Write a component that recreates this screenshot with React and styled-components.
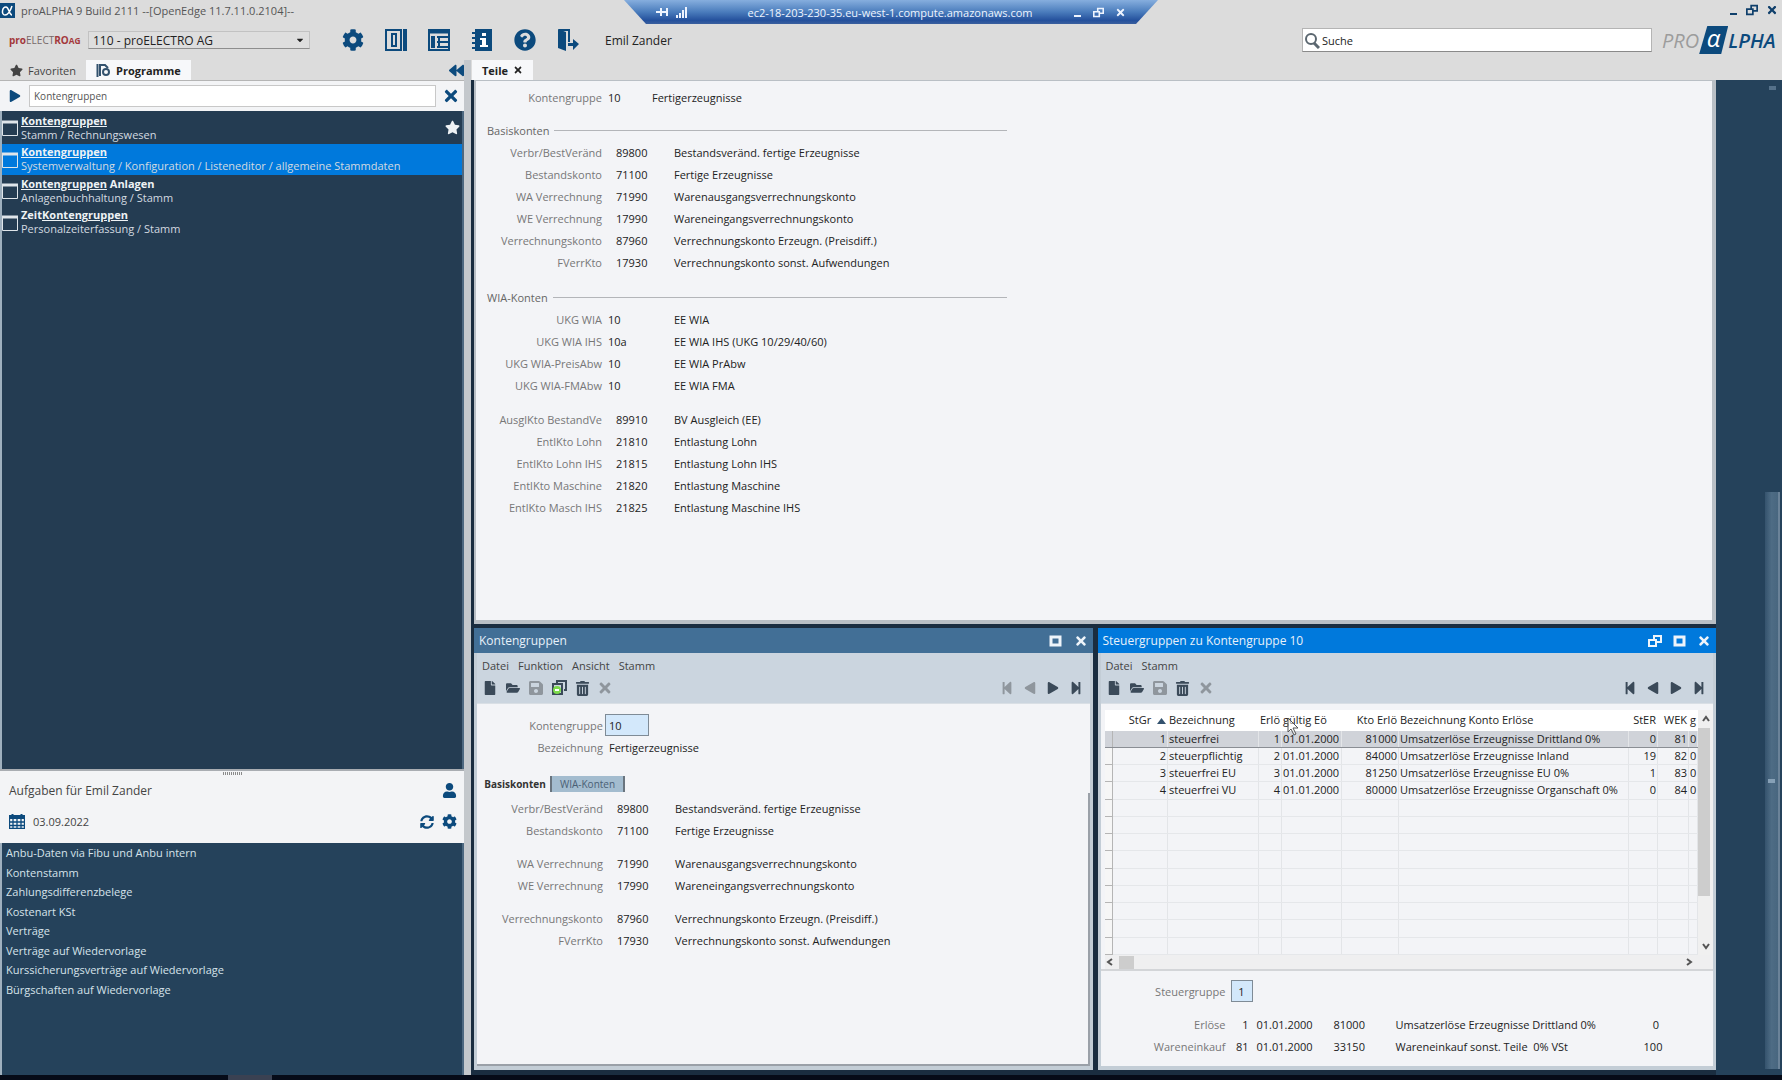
import React, { Component } from "react";
import styled, { createGlobalStyle } from "styled-components";
import {
  FaBackward,
  FaCaretDown,
  FaCog,
  FaFile,
  FaFolderOpen,
  FaPlay,
  FaQuestionCircle,
  FaSave,
  FaStar,
  FaStepBackward,
  FaStepForward,
  FaSyncAlt,
  FaTimes,
  FaTrashAlt,
  FaUser
} from "react-icons/fa";

const GlobalStyle = createGlobalStyle`
  * {
    box-sizing: border-box;
  }
  body {
    margin: 0;
    font-family: "Open Sans", "Noto Sans", sans-serif;
    font-size: 11px;
    color: #222;
    background: #060b18;
  }
  button, input, select {
    font: inherit;
    color: inherit;
  }
  button {
    display: inline-flex;
    align-items: center;
    justify-content: center;
    border: 0;
    padding: 0;
    background: none;
    cursor: pointer;
  }
  ul {
    list-style: none;
    margin: 0;
    padding: 0;
  }
  a {
    color: inherit;
    text-decoration: none;
  }
`;

/* ---------- frame ---------- */

const Page = styled.div`
  display: flex;
  flex-direction: column;
  min-height: 100vh;
  background: #dcdcdc;
`;
const TitleBar = styled.div`
  display: flex;
  align-items: center;
  gap: 6px;
  height: 20px;
  padding-right: 4px;
  color: #555;
`;
const TitleText = styled.div`
  flex: 1;
`;
const RemoteBar = styled.div`
  position: absolute;
  top: 0;
  left: 50%;
  width: 534px;
  height: 24px;
  margin-left: -267px;
  padding: 0 32px;
  display: flex;
  align-items: center;
  gap: 8px;
  color: #eef4ff;
  background: linear-gradient(#86aede, #4a7cbc 50%, #24509c 85%, #3a5f9e);
  clip-path: polygon(0 0, 100% 0, 512px 100%, 22px 100%);
`;
const RemoteHost = styled.span`
  flex: 1;
  padding-left: 20px;
  text-align: center;
`;
const WindowButtons = styled.div`
  display: flex;
  align-items: center;
  gap: ${props => props.gap || 8}px;
  color: ${props => props.color || "#0f3f6b"};
`;
const Toolbar = styled.div`
  display: flex;
  align-items: center;
  height: 40px;
  padding: 0 4px 0 9px;
`;
const CompanyLogo = styled.div`
  width: 79px;
  font-size: 10px;
  font-weight: bold;
  color: #a3383b;
  span {
    color: #77696a;
    font-weight: normal;
  }
`;
const SelectBox = styled.label`
  position: relative;
  width: 222px;
  svg {
    position: absolute;
    right: 5px;
    top: 4px;
    pointer-events: none;
  }
  select {
    appearance: none;
    width: 100%;
    height: 18px;
    padding: 0 4px;
    border: 1px solid #c2c2c2;
    border-bottom-color: #8e8e8e;
    border-radius: 0;
    background: #dedede;
    font-size: 12px;
  }
`;
const ToolIcons = styled.div`
  display: flex;
  gap: 19px;
  margin: 0 25px 0 31px;
  color: #0c4a7d;
  button {
    width: 24px;
    height: 24px;
  }
`;
const UserName = styled.div`
  flex: 1;
  font-size: 12px;
`;
const SearchBox = styled.label`
  display: flex;
  align-items: center;
  gap: 2px;
  width: 350px;
  height: 24px;
  margin-right: 10px;
  padding-left: 2px;
  border: 1px solid #b4b4b4;
  border-bottom-color: #8a8a8a;
  background: white;
  input {
    flex: 1;
    min-width: 0;
    border: 0;
    padding: 0;
    outline: 0;
  }
  input::placeholder {
    color: #222;
    opacity: 1;
  }
`;
const Brand = styled.div`
  display: flex;
  align-items: center;
  width: 116px;
  font-size: 20px;
  font-style: italic;
  color: #9c9c9c;
`;
const BrandAlpha = styled.span`
  width: 29px;
  height: 28px;
  line-height: 24px;
  text-align: center;
  font-size: 24px;
  color: white;
  background: #0c4a7d;
  clip-path: polygon(28% 0, 100% 0, 76% 100%, 0 100%);
`;
const BrandEnd = styled.span`
  color: #0c4a7d;
  font-weight: 600;
`;
const Workspace = styled.div`
  flex: 1;
  display: grid;
  grid-template-columns: 464px minmax(0, 1fr) 66px;
`;
const TabRow = styled.div`
  display: flex;
  height: 20px;
  padding-left: ${props => props.indent || 0}px;
`;
const Tab = styled.button`
  gap: 5px;
  padding: 0 10px;
  color: ${props => (props.active ? "#222" : "#444")};
  font-weight: ${props => (props.active ? "bold" : "normal")};
  background: ${props => (props.active ? "#f7f8fa" : "none")};
`;
const CollapseButton = styled.button`
  margin-left: auto;
  color: #0c4a7d;
`;
const Footer = styled.div`
  height: 5px;
  padding-left: 228px;
  background: #060b18;
  div {
    width: 44px;
    height: 5px;
    background: #3a4152;
  }
`;

/* ---------- sidebar ---------- */

const Sidebar = styled.div`
  display: flex;
  flex-direction: column;
`;
const ProgramSearch = styled.div`
  display: flex;
  align-items: center;
  height: 31px;
  padding: 0 4px 0 9px;
  background: #f3f4f6;
  border-top: 1px solid #b5b5b5;
  color: #0c4a7d;
  input {
    flex: 1;
    height: 22px;
    margin: 0 6px 0 8px;
    padding: 0 4px;
    border: 1px solid #c8c8c8;
    outline: 0;
    background: white;
    color: #555;
    font-size: 10px;
  }
`;
const DarkList = styled.div`
  flex: ${props => props.grow};
  border-left: 2px solid #9fb0be;
  border-right: 2px solid #4d6880;
  background: ${props => props.bg};
`;
const ProgramList = styled.ul`
  display: grid;
  grid-auto-rows: 1fr;
  height: 126px;
  margin-top: 1px;
`;
const Program = styled.li`
  display: flex;
  align-items: center;
  padding-right: 2px;
  line-height: 14px;
  color: #d3dae0;
  background: ${props => (props.selected ? "#0079dc" : "none")};
  a {
    flex: 1;
    padding-left: 3px;
  }
  strong {
    display: block;
    color: #eef2f5;
  }
`;
const TaskHeader = styled.div`
  height: 74px;
  padding: 1px 7px 0 9px;
  border-top: 2px solid #a9adb2;
  background: #f3f4f6;
`;
const Grip = styled.div`
  width: 20px;
  height: 3px;
  margin: 0 auto;
  background: repeating-linear-gradient(90deg, #8a8a8a 0 1px, #f3f4f6 1px 2px);
`;
const TaskRow = styled.div`
  display: flex;
  align-items: center;
  gap: 8px;
  height: 31px;
  font-size: ${props => props.size || 11}px;
  color: #444;
  svg {
    color: #0c4a7d;
  }
  span {
    flex: 1;
  }
`;
const TaskList = styled.ul`
  display: grid;
  grid-auto-rows: 1fr;
  height: 156px;
  padding-left: 4px;
  color: #d6e2ea;
  li {
    display: flex;
    align-items: center;
  }
`;

/* ---------- main area ---------- */

const Main = styled.div`
  display: flex;
  flex-direction: column;
  border-left: 7px solid #c4c8cc;
`;
const Desk = styled.div`
  flex: 1;
  display: flex;
  flex-direction: column;
  gap: 4px;
  padding: 0 0 5px 3px;
  background: #1a2d40;
`;
const MasterPanel = styled.div`
  flex: 1;
  padding: 5px 0;
  border: solid #b9bfc5;
  border-width: 1px 4px 4px 2px;
  background: #f3f4f7;
`;
const WindowRow = styled.div`
  display: flex;
  gap: 5px;
`;
const Window = styled.section`
  flex: 1;
  min-width: 0;
  display: flex;
  flex-direction: column;
  border: solid #c3cdd6;
  border-width: 0 3px 4px 3px;
  background: #f3f4f7;
`;
const WindowTitle = styled.div`
  display: flex;
  align-items: center;
  justify-content: space-between;
  height: 25px;
  margin: 0 -3px;
  padding: 0 5px;
  font-size: 12px;
  color: #e8f1fa;
  background: ${props => (props.active ? "#0079dc" : "#426f96")};
`;
const WindowBars = styled.div`
  height: 51px;
  padding: 2px 4px 0 3px;
  border-bottom: 1px solid #d9dfe5;
  background: #cbd5df;
`;
const Menu = styled.div`
  display: flex;
  gap: 9px;
  height: 20px;
  padding-left: 2px;
  color: #444;
`;
const IconBar = styled.div`
  display: flex;
  align-items: center;
  gap: 3px;
  height: 26px;
`;
const IconButton = styled.button`
  width: 20px;
  height: 20px;
  color: ${props => (props.disabled ? "#8f969d" : "#3b4a59")};
`;
const Spacer = styled.div`
  flex: 1;
`;
const Section = styled.div`
  margin-top: ${props => props.top || 0}px;
`;
const Legend = styled.div`
  display: flex;
  align-items: center;
  gap: 5px;
  width: 520px;
  height: 22px;
  margin-left: 11px;
  color: #666;
  &:after {
    content: "";
    flex: 1;
    border-top: 1px solid #b3b5b9;
  }
`;
const FieldRow = styled.div`
  display: grid;
  grid-template-columns: 126px ${props => props.valueWidth || 72}px 1fr;
  align-items: center;
  height: 22px;
  color: #222;
  label,
  label + span {
    white-space: nowrap;
  }
  label {
    text-align: right;
    color: #777;
  }
`;
const FieldValue = styled.span`
  padding-left: ${props => (props.wide ? 14 : 6)}px;
`;
const KeyInput = styled.input`
  width: ${props => props.size * 22}px;
  height: 22px;
  margin-left: 2px;
  padding: 0 3px;
  border: 1px solid #7f8b96;
  outline: 0;
  background: #d3e8fb;
  text-align: ${props => props.align || "left"};
`;
const PageTabs = styled.div`
  display: flex;
  height: 17px;
  margin-top: 18px;
  padding-left: 3px;
`;
const PageTab = styled.button`
  width: ${props => (props.active ? 70 : 75)}px;
  height: 16px;
  font-size: 10px;
  font-weight: ${props => (props.active ? "bold" : "normal")};
  color: ${props => (props.active ? "#333" : "#4a6075")};
  border-right: ${props => (props.active ? "0" : "2px solid #69747e")};
  border-left: ${props => (props.active ? "0" : "2px solid #69747e")};
  background: ${props => (props.active ? "none" : "#a3bccf")};
`;
const PageBody = styled.div`
  flex: 1;
  padding-top: 4px;
  border-right: 2px solid #9aa0a8;
  border-bottom: 2px solid #9aa0a8;
`;

/* ---------- tax group browser ---------- */

const Browser = styled.div`
  display: grid;
  grid-template-columns: minmax(0, 1fr) 15px;
  margin-top: 6px;
  padding-left: 4px;
  border-bottom: 2px solid #d3d5d8;
`;
const Table = styled.table`
  width: 100%;
  height: 245px;
  table-layout: fixed;
  border-collapse: collapse;
  th,
  td {
    padding: 0 1px;
    overflow: hidden;
    white-space: nowrap;
    line-height: 14px;
    border-right: 1px solid #e3e5e8;
    border-bottom: 1px solid #e5e7ea;
  }
  th {
    height: 20px;
    font-weight: normal;
    border-color: #fff;
    background: #fff;
  }
  td:first-child {
    border: 1px solid #b5b5b5;
    border-left: 0;
    background: #f6f6f6;
  }
  tr.current td {
    background: #d0d3d9;
    border-bottom-color: #8a8e94;
  }
`;
const Cell = styled.td`
  text-align: ${props => props.align || "left"};
`;
const HeadCell = styled.th`
  text-align: ${props => props.align || "left"};
`;
const VScroll = styled.div`
  display: flex;
  flex-direction: column;
  align-items: center;
  justify-content: space-between;
  padding: 5px 0;
  color: #555;
  background: linear-gradient(#cdcdcd, #cdcdcd) 0 18px / 12px 168px no-repeat #f0f0f0;
`;
const HScroll = styled.div`
  grid-column: 1 / -1;
  display: flex;
  align-items: center;
  height: 14px;
  padding: 0 20px 0 1px;
  color: #555;
  background: #efeff0;
  div {
    width: 15px;
    height: 13px;
    margin: 0 auto 0 5px;
    background: #cdcdcd;
  }
`;
const DetailRow = styled.div`
  display: grid;
  grid-template-columns: 128px 20px 85px 62px 1fr 120px;
  align-items: center;
  height: 22px;
  margin-top: ${props => props.top || 0}px;
  white-space: nowrap;
  label {
    text-align: right;
    padding-right: 3px;
    color: #777;
  }
  label + span {
    text-align: right;
  }
  label ~ span:nth-child(3) {
    padding-left: 8px;
  }
  label ~ span:last-child {
    text-align: center;
  }
`;
const Cursor = styled.svg`
  position: absolute;
  left: 186px;
  top: 13px;
  pointer-events: none;
`;
const CursorArea = styled.div`
  position: relative;
`;

const Dock = styled.div`
  display: flex;
  flex-direction: column;
  margin-top: 20px;
  padding: 6px 2px 6px 49px;
  align-items: stretch;
  background: #25425b;
`;
const DockGrip = styled.div`
  width: 7px;
  height: 4px;
  margin: 0 auto;
  background: #55718a;
`;
const DockThumb = styled.div`
  display: flex;
  align-items: center;
  flex: 1;
  margin-top: 402px;
  border-right: 2px solid #6b8399;
  background: linear-gradient(90deg, #35536d, #4e6c85 50%, #48667f);
  ${DockGrip} {
    background: #86a0b6;
  }
`;

/* ---------- icons ---------- */

const PanelIcon = () => (
  <svg width="22" height="22" viewBox="0 0 22 22" fill="none" stroke="currentColor" strokeWidth="2">
    <path d="M1 1h15v20H1z" />
    <path d="M7 5h4v12H7z" />
    <path d="M20 0v22" strokeWidth="4" />
  </svg>
);
const LayoutIcon = () => (
  <svg width="22" height="22" viewBox="0 0 22 22" fill="none" stroke="currentColor" strokeWidth="2">
    <path d="M1 1h20v20H1z" />
    <path d="M1 3h20" strokeWidth="3" />
    <path d="M5 7v12" strokeWidth="4" />
    <path d="M9 8h11M9 13h11M9 18h11M11 7v12" />
  </svg>
);
const InfoIcon = () => (
  <svg width="20" height="22" viewBox="0 0 20 22" fill="currentColor">
    <path d="M3 0h17v22H3z" />
    <path d="M0 3h4v2H0zM0 8h4v2H0zM0 13h4v2H0zM0 18h4v2H0z" />
    <path d="M10 4h4v3h-4zM8 9h6v7h2v2H8v-2h2v-5H8z" fill="#fff" />
  </svg>
);
const ExitIcon = () => (
  <svg width="24" height="22" viewBox="0 0 24 22" fill="currentColor">
    <path d="M2 0l8 3v19l-8-3z" />
    <path d="M3 0h11v13h-2V2H3z" />
    <path d="M12 14h5v-4l6 5-6 6v-4h-5z" />
  </svg>
);
const ProgramIcon = () => (
  <svg width="16" height="17" viewBox="0 0 16 17" fill="none" stroke="#dfe5ea">
    <path d="M.5 2.500h15v14H.5z" />
    <path d="M0 3h16" strokeWidth="3" />
  </svg>
);
const CalendarIcon = () => (
  <svg width="16" height="15" viewBox="0 0 16 15" fill="none" stroke="currentColor">
    <path d="M0 3h16" strokeWidth="4" />
    <path d="M.5 5v9.500h15V5M4 5v10M8 5v10M12 5v10M0 8h16M0 11.500h16" strokeWidth="1.300" />
    <path d="M3.500 0v3M12.500 0v3" strokeWidth="2" />
  </svg>
);
const RefreshIcon = styled(FaSyncAlt)`
  width: 14px;
  height: 14px;
`;
const MinimizeIcon = () => (
  <svg width="10" height="12" viewBox="0 0 10 12" stroke="currentColor" strokeWidth="2">
    <path d="M2 10h7" />
  </svg>
);
const RestoreIcon = ({ size = 12 }) => (
  <svg width={size} height={size} viewBox="0 0 14 14" fill="none" stroke="currentColor" strokeWidth="2">
    <path d="M1 6h7v6H1zM6 5V2h7v6H9" />
  </svg>
);
const MaximizeIcon = () => (
  <svg width="13" height="12" viewBox="0 0 13 12" fill="none" stroke="currentColor" strokeWidth="3">
    <path d="M2 2h9v8H2z" />
  </svg>
);
const CopyIcon = () => (
  <svg width="15" height="16" viewBox="0 0 15 16" fill="none" stroke="currentColor" strokeWidth="2">
    <path d="M5 3V1h9v9h-2M1 4h9v10H1z" />
    <circle cx="5" cy="10" r="4" fill="#7ddb4c" stroke="none" />
    <path d="M3 10h4" stroke="#fff" />
  </svg>
);
const SearchIcon = () => (
  <svg width="15" height="17" viewBox="0 0 15 17" fill="none" stroke="#5b6770" strokeWidth="2">
    <circle cx="6" cy="7" r="5" />
    <path d="M9 11l5 5" strokeWidth="3" />
  </svg>
);
const AppIcon = () => (
  <svg width="15" height="15" viewBox="0 0 15 15">
    <path d="M0 0h15v15H0z" fill="#0c4a7d" />
    <path d="M12 3c-2 6-4 9-7 9-4 0-3-8 1-8 3 0 3 8 6 8" fill="none" stroke="#fff" strokeWidth="1.500" />
  </svg>
);
const ProgramsIcon = () => (
  <svg width="15" height="13" viewBox="0 0 15 13" fill="none" stroke="#33526e">
    <path d="M1.500 0v13M4 12V1h5l3 3" strokeWidth="2" />
    <circle cx="10" cy="8" r="3" strokeWidth="2" />
  </svg>
);
const PinIcon = () => (
  <svg width="12" height="10" viewBox="0 0 12 10" stroke="currentColor" strokeWidth="2">
    <path d="M0 5h5M5 1v8M5 5h6M11 1v8" />
  </svg>
);
const SignalIcon = () => (
  <svg width="12" height="11" viewBox="0 0 12 11" stroke="currentColor" strokeWidth="2">
    <path d="M1 11V8M4 11V6M7 11V3M10 11V0" />
  </svg>
);
const SortIcon = () => (
  <svg width="9" height="6" viewBox="0 0 9 6">
    <path d="M4.500 0L9 6H0z" fill="#33526e" />
  </svg>
);
const Chevron = ({ d }) => (
  <svg width="8" height="8" viewBox="0 0 8 8" fill="none" stroke="currentColor" strokeWidth="2">
    <path d={d} />
  </svg>
);

/* ---------- data ---------- */

const programs = [
  { match: "Kontengruppen", path: "Stamm / Rechnungswesen", favorite: true },
  {
    match: "Kontengruppen",
    path: "Systemverwaltung / Konfiguration / Listeneditor / allgemeine Stammdaten",
    selected: true
  },
  { match: "Kontengruppen", after: " Anlagen", path: "Anlagenbuchhaltung / Stamm" },
  { before: "Zeit", match: "Kontengruppen", path: "Personalzeiterfassung / Stamm" }
];

const tasks = [
  "Anbu-Daten via Fibu und Anbu intern",
  "Kontenstamm",
  "Zahlungsdifferenzbelege",
  "Kostenart KSt",
  "Verträge",
  "Verträge auf Wiedervorlage",
  "Kurssicherungsverträge auf Wiedervorlage",
  "Bürgschaften auf Wiedervorlage"
];

const stockAccounts = [
  ["Verbr/BestVeränd", "89800", "Bestandsveränd. fertige Erzeugnisse"],
  ["Bestandskonto", "71100", "Fertige Erzeugnisse"]
];
const transferAccounts = [
  ["WA Verrechnung", "71990", "Warenausgangsverrechnungskonto"],
  ["WE Verrechnung", "17990", "Wareneingangsverrechnungskonto"]
];
const clearingAccounts = [
  ["Verrechnungskonto", "87960", "Verrechnungskonto Erzeugn. (Preisdiff.)"],
  ["FVerrKto", "17930", "Verrechnungskonto sonst. Aufwendungen"]
];
const wiaAccounts = [
  ["UKG WIA", "10", "EE WIA"],
  ["UKG WIA IHS", "10a", "EE WIA IHS (UKG 10/29/40/60)"],
  ["UKG WIA-PreisAbw", "10", "EE WIA PrAbw"],
  ["UKG WIA-FMAbw", "10", "EE WIA FMA"]
];
const reliefAccounts = [
  ["AusglKto BestandVe", "89910", "BV Ausgleich (EE)"],
  ["EntlKto Lohn", "21810", "Entlastung Lohn"],
  ["EntlKto Lohn IHS", "21815", "Entlastung Lohn IHS"],
  ["EntlKto Maschine", "21820", "Entlastung Maschine"],
  ["EntlKto Masch IHS", "21825", "Entlastung Maschine IHS"]
];

const taxGroups = [
  ["1", "steuerfrei", "1", "01.01.2000", "81000", "Umsatzerlöse Erzeugnisse Drittland 0%", "0", "81", "0"],
  ["2", "steuerpflichtig", "2", "01.01.2000", "84000", "Umsatzerlöse Erzeugnisse Inland", "19", "82", "0"],
  ["3", "steuerfrei EU", "3", "01.01.2000", "81250", "Umsatzerlöse Erzeugnisse EU 0%", "1", "83", "0"],
  ["4", "steuerfrei VU", "4", "01.01.2000", "80000", "Umsatzerlöse Erzeugnisse Organschaft 0%", "0", "84", "0"]
];
const alignments = ["right", "left", "right", "left", "right", "left", "right", "right", "left"];
const columnWidths = [8, 55, 91, 23, 60, 57, null, 29, 31, 9];
const emptyRows = [0, 1, 2, 3, 4, 5, 6, 7, 8];

const Accounts = ({ rows, wide, top }) => (
  <Section top={top}>
    {rows.map(([label, value, text]) => (
      <FieldRow key={label}>
        <label>{label}</label>
        <FieldValue wide={wide ? 1 : 0}>{value}</FieldValue>
        <span>{text}</span>
      </FieldRow>
    ))}
  </Section>
);

const RecordNav = ({ atStart }) => (
  <>
    <Spacer />
    <IconButton aria-label="Erster" disabled={atStart}><FaStepBackward size={14} /></IconButton>
    <IconButton aria-label="Voriger" disabled={atStart}><FaPlay size={12} transform="scale(-1 1)" /></IconButton>
    <IconButton aria-label="Nächster"><FaPlay size={12} /></IconButton>
    <IconButton aria-label="Letzter"><FaStepForward size={14} /></IconButton>
  </>
);

class App extends Component {
  state = {
    query: "Kontengruppen",
    group: "10",
    taxGroup: "1"
  };
  handleChange = e => {
    const { name, value } = e.target;
    this.setState({ [name]: value });
  };
  renderSidebar() {
    return (
      <Sidebar>
        <TabRow>
          <Tab><FaStar size={13} />Favoriten</Tab>
          <Tab active={1}><ProgramsIcon />Programme</Tab>
          <CollapseButton aria-label="Einklappen"><FaBackward size={15} /></CollapseButton>
        </TabRow>
        <ProgramSearch>
          <button aria-label="Starten"><FaPlay size={12} /></button>
          <input name="query" aria-label="Programm" value={this.state.query} onChange={this.handleChange} />
          <button aria-label="Löschen"><FaTimes size={18} /></button>
        </ProgramSearch>
        <DarkList grow="1" bg="#243c52">
          <ProgramList>
            {programs.map(p => (
              <Program key={p.path} selected={p.selected}>
                <ProgramIcon />
                <a href="#programm">
                  <strong>{p.before}<u>{p.match}</u>{p.after}</strong>
                  {p.path}
                </a>
                {p.favorite && <FaStar size={15} color="#eef2f5" />}
              </Program>
            ))}
          </ProgramList>
        </DarkList>
        <TaskHeader>
          <Grip />
          <TaskRow size={12}>
            <span>Aufgaben für Emil Zander</span>
            <FaUser size={15} />
          </TaskRow>
          <TaskRow>
            <CalendarIcon />
            <span>03.09.2022</span>
            <RefreshIcon />
            <FaCog size={15} />
          </TaskRow>
        </TaskHeader>
        <DarkList grow="0 0 232px" bg="#25425b">
          <TaskList>
            {tasks.map(t => <li key={t}><a href="#aufgabe">{t}</a></li>)}
          </TaskList>
        </DarkList>
      </Sidebar>
    );
  }
  renderGroupWindow() {
    return (
      <Window>
        <WindowTitle>
          Kontengruppen
          <WindowButtons gap={12} color="#eef4fa">
            <button aria-label="Maximieren"><MaximizeIcon /></button>
            <button aria-label="Schließen"><FaTimes size={14} /></button>
          </WindowButtons>
        </WindowTitle>
        <WindowBars>
          <Menu>
            <button>Datei</button>
            <button>Funktion</button>
            <button>Ansicht</button>
            <button>Stamm</button>
          </Menu>
          <IconBar>
            <IconButton aria-label="Neu"><FaFile size={14} /></IconButton>
            <IconButton aria-label="Öffnen"><FaFolderOpen size={14} /></IconButton>
            <IconButton aria-label="Speichern" disabled><FaSave size={16} /></IconButton>
            <IconButton aria-label="Kopieren"><CopyIcon /></IconButton>
            <IconButton aria-label="Entfernen"><FaTrashAlt size={15} /></IconButton>
            <IconButton aria-label="Abbrechen" disabled><FaTimes size={16} /></IconButton>
            <RecordNav atStart />
          </IconBar>
        </WindowBars>
        <Section top={10}>
          <FieldRow>
            <label htmlFor="group">Kontengruppe</label>
            <KeyInput id="group" name="group" size={2} value={this.state.group} onChange={this.handleChange} />
          </FieldRow>
          <FieldRow>
            <label>Bezeichnung</label>
            <FieldValue>Fertigerzeugnisse</FieldValue>
          </FieldRow>
        </Section>
        <PageTabs>
          <PageTab active={1}>Basiskonten</PageTab>
          <PageTab>WIA-Konten</PageTab>
        </PageTabs>
        <PageBody>
          <Accounts wide rows={stockAccounts} />
          <Accounts wide rows={transferAccounts} top={11} />
          <Accounts wide rows={clearingAccounts} top={11} />
        </PageBody>
      </Window>
    );
  }
  renderTaxWindow() {
    return (
      <Window>
        <WindowTitle active={1}>
          Steuergruppen zu Kontengruppe 10
          <WindowButtons gap={11} color="#eef4fa">
            <button aria-label="Lösen"><RestoreIcon size={14} /></button>
            <button aria-label="Maximieren"><MaximizeIcon /></button>
            <button aria-label="Schließen"><FaTimes size={14} /></button>
          </WindowButtons>
        </WindowTitle>
        <WindowBars>
          <Menu>
            <button>Datei</button>
            <button>Stamm</button>
          </Menu>
          <IconBar>
            <IconButton aria-label="Neu"><FaFile size={14} /></IconButton>
            <IconButton aria-label="Öffnen"><FaFolderOpen size={14} /></IconButton>
            <IconButton aria-label="Speichern" disabled><FaSave size={16} /></IconButton>
            <IconButton aria-label="Entfernen"><FaTrashAlt size={15} /></IconButton>
            <IconButton aria-label="Abbrechen" disabled><FaTimes size={16} /></IconButton>
            <RecordNav />
          </IconBar>
        </WindowBars>
        <CursorArea>
          <Browser>
            <Table>
              <colgroup>
                {columnWidths.map((w, i) => <col key={i} width={w || undefined} />)}
              </colgroup>
              <thead>
                <tr>
                  <HeadCell />
                  <HeadCell align="right">StGr&nbsp; <SortIcon /></HeadCell>
                  <HeadCell>Bezeichnung</HeadCell>
                  <HeadCell>Erlö</HeadCell>
                  <HeadCell>gültig Eö</HeadCell>
                  <HeadCell align="right">Kto Erlö</HeadCell>
                  <HeadCell>Bezeichnung Konto Erlöse</HeadCell>
                  <HeadCell align="right">StER</HeadCell>
                  <HeadCell align="right">WEK</HeadCell>
                  <HeadCell>g</HeadCell>
                </tr>
              </thead>
              <tbody>
                {taxGroups.map((row, r) => (
                  <tr key={row[0]} className={r === 0 ? "current" : undefined}>
                    <Cell />
                    {row.map((value, i) => <Cell key={i} align={alignments[i]}>{value}</Cell>)}
                  </tr>
                ))}
                {emptyRows.map(r => (
                  <tr key={r}>
                    <Cell />
                    {alignments.map((a, i) => <Cell key={i}>&nbsp;</Cell>)}
                  </tr>
                ))}
              </tbody>
            </Table>
            <VScroll>
              <Chevron d="M1 6l3-4 3 4" />
              <Chevron d="M1 2l3 4 3-4" />
            </VScroll>
            <HScroll>
              <Chevron d="M6 1L2 4l4 3" />
              <div />
              <Chevron d="M2 1l4 3-4 3" />
            </HScroll>
          </Browser>
          <Cursor width="13" height="19" viewBox="0 0 13 19">
            <path d="M1 1v14l3-3 3 6 2-1-3-6h5z" fill="#fff" fillOpacity=".5" stroke="#555" />
          </Cursor>
        </CursorArea>
        <DetailRow top={9}>
          <label htmlFor="taxGroup">Steuergruppe</label>
          <KeyInput id="taxGroup" name="taxGroup" size={1} align="center" value={this.state.taxGroup} onChange={this.handleChange} />
        </DetailRow>
        <DetailRow top={11}>
          <label>Erlöse</label>
          <span>1</span>
          <span>01.01.2000</span>
          <span>81000</span>
          <span>Umsatzerlöse Erzeugnisse Drittland 0%</span>
          <span>0</span>
        </DetailRow>
        <DetailRow>
          <label>Wareneinkauf</label>
          <span>81</span>
          <span>01.01.2000</span>
          <span>33150</span>
          <span>Wareneinkauf sonst. Teile &nbsp;0% VSt</span>
          <span>100</span>
        </DetailRow>
        <Section top={9} />
      </Window>
    );
  }
  render() {
    return (
      <Page>
        <GlobalStyle />
        <TitleBar>
          <AppIcon />
          <TitleText>proALPHA 9 Build 2111 --[OpenEdge 11.7.11.0.2104]--</TitleText>
          <WindowButtons>
            <button aria-label="Minimieren"><MinimizeIcon /></button>
            <button aria-label="Wiederherstellen"><RestoreIcon /></button>
            <button aria-label="Beenden"><FaTimes size={12} /></button>
          </WindowButtons>
        </TitleBar>
        <RemoteBar>
          <PinIcon />
          <SignalIcon />
          <RemoteHost>ec2-18-203-230-35.eu-west-1.compute.amazonaws.com</RemoteHost>
          <WindowButtons gap={11} color="#eef4ff">
            <button aria-label="Sitzung minimieren"><MinimizeIcon /></button>
            <button aria-label="Sitzung verkleinern"><RestoreIcon size={11} /></button>
            <button aria-label="Sitzung trennen"><FaTimes size={11} /></button>
          </WindowButtons>
        </RemoteBar>
        <Toolbar>
          <CompanyLogo>pro<span>ELECT</span>RO<small>AG</small></CompanyLogo>
          <SelectBox>
            <select aria-label="Firma">
              <option>110 - proELECTRO AG</option>
            </select>
            <FaCaretDown size={10} />
          </SelectBox>
          <ToolIcons>
            <button aria-label="Einstellungen"><FaCog size={22} /></button>
            <button aria-label="Leiste"><PanelIcon /></button>
            <button aria-label="Layout"><LayoutIcon /></button>
            <button aria-label="Info"><InfoIcon /></button>
            <button aria-label="Hilfe"><FaQuestionCircle size={22} /></button>
            <button aria-label="Abmelden"><ExitIcon /></button>
          </ToolIcons>
          <UserName>Emil Zander</UserName>
          <SearchBox>
            <SearchIcon />
            <input placeholder="Suche" aria-label="Suche" />
          </SearchBox>
          <Brand>PRO<BrandAlpha>α</BrandAlpha><BrandEnd>LPHA</BrandEnd></Brand>
        </Toolbar>
        <Workspace>
          {this.renderSidebar()}
          <Main>
            <TabRow indent={1}>
              <Tab active={1}>Teile <FaTimes size={10} /></Tab>
            </TabRow>
            <Desk>
              <MasterPanel>
                <FieldRow valueWidth={50}>
                  <label>Kontengruppe</label>
                  <FieldValue>10</FieldValue>
                  <span>Fertigerzeugnisse</span>
                </FieldRow>
                <Section top={11}>
                  <Legend>Basiskonten</Legend>
                  <Accounts wide rows={[...stockAccounts, ...transferAccounts, ...clearingAccounts]} />
                </Section>
                <Section top={13}>
                  <Legend>WIA-Konten</Legend>
                  <Accounts rows={wiaAccounts} />
                  <Accounts wide rows={reliefAccounts} top={12} />
                </Section>
              </MasterPanel>
              <WindowRow>
                {this.renderGroupWindow()}
                {this.renderTaxWindow()}
              </WindowRow>
            </Desk>
          </Main>
          <Dock>
            <DockGrip />
            <DockThumb><DockGrip /></DockThumb>
          </Dock>
        </Workspace>
        <Footer><div /></Footer>
      </Page>
    );
  }
}

export default App;
